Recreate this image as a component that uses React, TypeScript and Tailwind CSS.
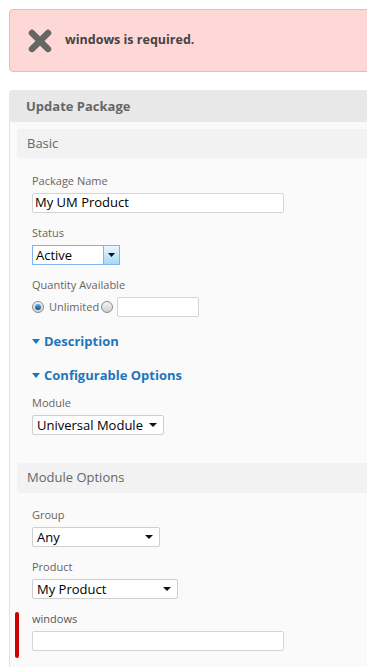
import { ReactNode } from "react";

const font = { fontFamily: '"Open Sans", "Noto Sans", sans-serif' };

function Label({ children }: { children: ReactNode }) {
  return <div className="mb-[5px] text-[11px] leading-[14px] text-[#6a645e]">{children}</div>;
}

function PlainSelect({ value, width }: { value: string; width: string }) {
  return (
    <div
      className={`flex h-[20px] items-center justify-between rounded-[2px] border border-[#cfcfcf] bg-white pl-[4px] pr-[6px] text-[13px] text-black ${width}`}
    >
      <span className="leading-[18px]">{value}</span>
      <svg width="8" height="4" viewBox="0 0 8 4">
        <path d="M0 0 L8 0 L4 4 Z" fill="#111" />
      </svg>
    </div>
  );
}

function Radio({ checked }: { checked?: boolean }) {
  return (
    <span className="flex h-[12px] w-[12px] items-center justify-center rounded-full border border-[#8a8a8a] bg-gradient-to-b from-[#f4f4f4] to-[#cfcfcf]">
      {checked && <span className="h-[6px] w-[6px] rounded-full bg-gradient-to-b from-[#5fb3e6] to-[#0b4f86]" />}
    </span>
  );
}

function Toggle({ children }: { children: ReactNode }) {
  return (
    <div className="flex items-center text-[13px] font-bold leading-[16px] text-[#1d76ba]">
      <svg width="8" height="5" viewBox="0 0 8 5" className="mr-[4px]">
        <path d="M0 0 L8 0 L4 5 Z" fill="#1d76ba" />
      </svg>
      {children}
    </div>
  );
}

function SubHeader({ children }: { children: ReactNode }) {
  return (
    <div className="flex items-center rounded-l-[4px] bg-[#f2f2f2] pl-[10px] text-[13px] text-[#666]">
      {children}
    </div>
  );
}

export default function App() {
  return (
    <div className="min-h-[667px] overflow-hidden bg-white pl-[9px] pt-[9px]" style={font}>
      {/* alerta */}
      <div className="flex h-[63px] w-[420px] items-center rounded-[4px] border border-[#f4b6b6] bg-[#fed7d7] pl-[18px]">
        <svg width="24" height="24" viewBox="0 0 24 24">
          <path d="M4 4 L20 20 M20 4 L4 20" stroke="#666" strokeWidth="6.5" strokeLinecap="round" />
        </svg>
        <span className="ml-[13px] text-[12.5px] font-bold text-[#444]">windows is required.</span>
      </div>

      {/* panel */}
      <div className="mt-[18px] w-[420px]">
        <div className="flex h-[32px] items-center rounded-tl-[4px] bg-[#e8e8e8] pl-[17px] pt-[1px] text-[13px] font-bold text-[#666]">
          Update Package
        </div>
        <div className="border-l border-[#e2e2e2] bg-[#fafafa] pb-[20px] pl-[7px] pt-[7px]">
          <div className="flex h-[29px]">
            <SubHeader>Basic</SubHeader>
            <div className="flex-1 bg-[#f2f2f2]" />
          </div>

          <div className="pl-[15px] pt-[16px]">
            <Label>Package Name</Label>
            <div className="flex h-[20px] w-[252px] items-center rounded-[2px] border border-[#d4d4d4] bg-white pl-[2px] text-[13px] text-black">
              My UM Product
            </div>

            <div className="mt-[13px]">
              <Label>Status</Label>
              <div className="flex h-[20px] w-[88px] items-stretch border border-[#7eb4ea] bg-white">
                <span className="flex-1 pl-[3px] text-[13px] leading-[18px] text-black">Active</span>
                <span className="flex w-[16px] items-center justify-center border-l border-[#7eb4ea] bg-gradient-to-b from-[#eaf6fd] to-[#a7d9f5]">
                  <svg width="7" height="4" viewBox="0 0 7 4">
                    <path d="M0 0 L7 0 L3.5 4 Z" fill="#111" />
                  </svg>
                </span>
              </div>
            </div>

            <div className="mt-[13px]">
              <Label>Quantity Available</Label>
              <div className="flex h-[20px] items-center">
                <Radio checked />
                <span className="ml-[5px] text-[11px] text-[#6a645e]">Unlimited</span>
                <span className="ml-[2px]"><Radio /></span>
                <div className="ml-[4px] h-[20px] w-[82px] rounded-[2px] border border-[#d4d4d4] bg-white" />
              </div>
            </div>

            <div className="mt-[16px]">
              <Toggle>Description</Toggle>
            </div>
            <div className="mt-[18px]">
              <Toggle>Configurable Options</Toggle>
            </div>

            <div className="mt-[13px]">
              <Label>Module</Label>
              <PlainSelect value="Universal Module" width="w-[132px]" />
            </div>
          </div>

          <div className="mt-[28px] flex h-[30px]">
            <SubHeader>Module Options</SubHeader>
            <div className="flex-1 bg-[#f2f2f2]" />
          </div>

          <div className="pl-[15px] pt-[15px]">
            <Label>Group</Label>
            <PlainSelect value="Any" width="w-[128px]" />

            <div className="mt-[13px]">
              <Label>Product</Label>
              <PlainSelect value="My Product" width="w-[146px]" />
            </div>

            <div className="-ml-[17px] mt-[13px] flex">
              <div className="h-[46px] w-[4px] rounded-full bg-[#cc0000]" />
              <div className="ml-[13px]">
                <div className="mb-[5px] text-[11px] leading-[14px] text-[#555]">windows</div>
                <div className="h-[20px] w-[252px] rounded-[2px] border border-[#d4d4d4] bg-white" />
              </div>
            </div>
          </div>
        </div>
      </div>
    </div>
  );
}
